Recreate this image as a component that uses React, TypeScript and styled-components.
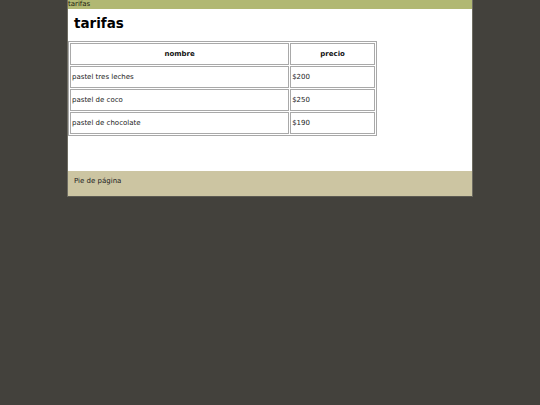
import React from "react";
import styled, { createGlobalStyle } from "styled-components";

const Global = createGlobalStyle`
  html, body { margin: 0; padding: 0; background: #43413c; }
  body { font-family: "DejaVu Sans", Verdana, sans-serif; }
`;

const Page = styled.div`
  width: 404px;
  margin: 0 auto;
  border-left: 1px solid #6e6c62;
  border-right: 1px solid #6e6c62;
  border-bottom: 1px solid #5c5a52;
  background: #ffffff;
`;

const TopBar = styled.div`
  height: 9px;
  background: #b1b873;
  font-size: 7px;
  line-height: 9px;
  color: #1a1a10;
`;

const Main = styled.main`
  height: 162px;
  box-sizing: border-box;
  padding-top: 6px;
`;

const Title = styled.h1`
  margin: 0 0 9px 6px;
  font-size: 13.5px;
  line-height: 17px;
  font-weight: bold;
  color: #000;
`;

const Table = styled.table`
  border: 1px solid #a8a8a8;
  border-spacing: 1px;
  width: 309px;
`;

const Th = styled.th<{ $w: number }>`
  width: ${(p) => p.$w}px;
  height: 20px;
  box-sizing: border-box;
  border: 1px solid #a9a9a9;
  font-size: 7px;
  font-weight: bold;
  text-align: center;
  padding: 0 1px;
  color: #111;
`;

const Td = styled.td`
  height: 20px;
  box-sizing: border-box;
  border: 1px solid #a9a9a9;
  font-size: 7px;
  padding: 0 1px;
  color: #222;
`;

const Row = styled.tr`
  height: 22px;
`;

const Footer = styled.footer`
  height: 25px;
  background: #ccc5a2;
  padding: 5px 6px 0;
  box-sizing: border-box;
  font-size: 7px;
  line-height: 10px;
  color: #222;
`;

const rows = [
  ["pastel tres leches", "$200"],
  ["pastel de coco", "$250"],
  ["pastel de chocolate", "$190"],
];

export default function App() {
  return (
    <>
      <Global />
      <Page>
        <TopBar>tarifas</TopBar>
        <Main>
          <Title>tarifas</Title>
          <Table>
            <thead>
              <Row>
                <Th $w={217}>nombre</Th>
                <Th $w={84}>precio</Th>
              </Row>
            </thead>
            <tbody>
              {rows.map(([n, p]) => (
                <Row key={n}>
                  <Td>{n}</Td>
                  <Td>{p}</Td>
                </Row>
              ))}
            </tbody>
          </Table>
        </Main>
        <Footer>Pie de página</Footer>
      </Page>
    </>
  );
}
